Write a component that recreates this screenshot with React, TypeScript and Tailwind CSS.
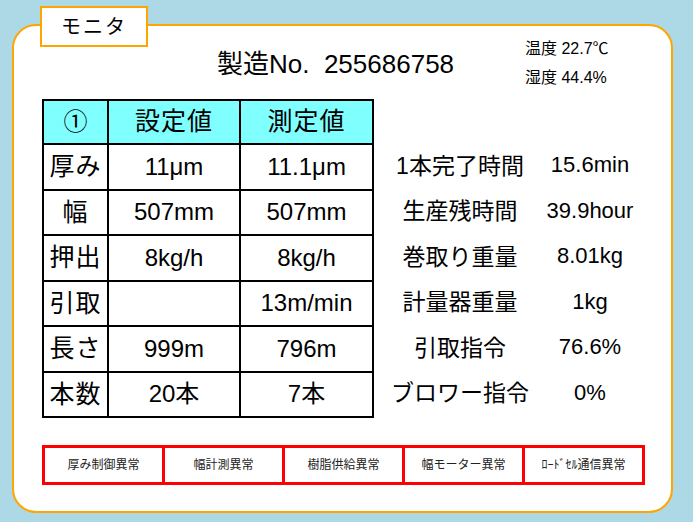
import React from 'react';

const FONT = { fontFamily: '"Liberation Sans", "Noto Sans CJK JP", sans-serif' };

const TABLE_ROWS = [
  { label: '厚み', set: '11μm', actual: '11.1μm' },
  { label: '幅', set: '507mm', actual: '507mm' },
  { label: '押出', set: '8kg/h', actual: '8kg/h' },
  { label: '引取', set: '', actual: '13m/min' },
  { label: '長さ', set: '999m', actual: '796m' },
  { label: '本数', set: '20本', actual: '7本' },
];

const STATUS = [
  { label: '1本完了時間', value: '15.6min' },
  { label: '生産残時間', value: '39.9hour' },
  { label: '巻取り重量', value: '8.01kg' },
  { label: '計量器重量', value: '1kg' },
  { label: '引取指令', value: '76.6%' },
  { label: 'ブロワー指令', value: '0%' },
];

const ALARMS = ['厚み制御異常', '幅計測異常', '樹脂供給異常', '幅モーター異常', 'ﾛｰﾄﾞｾﾙ通信異常'];

export default function App() {
  return (
    <div className="w-[693px] h-[522px] bg-[#add8e6] pt-[24px] pl-[12px] text-black overflow-hidden" style={FONT}>
      <div className="relative w-[661px] h-[489px] bg-white border-2 border-[#ffa500] rounded-[24px]">
        {/* title tab */}
        <div className="absolute left-[26px] top-[-20px] w-[108px] h-[41px] bg-white border-2 border-[#ffa500] flex items-center justify-center text-[20px] tracking-[2px]">
          モニタ
        </div>

        {/* header */}
        <div className="flex h-[73px]">
          <div className="w-[511px] pl-[203px] pt-[22px] text-[26px] leading-[32px] whitespace-nowrap">
            製造No.&nbsp;&nbsp;255686758
          </div>
          <div className="pt-[8px] text-[16px] leading-[29px] whitespace-nowrap">
            <div>温度 22.7℃</div>
            <div>湿度 44.4%</div>
          </div>
        </div>

        {/* table + status */}
        <div className="flex pl-[28px]">
          <table className="border-collapse border-2 border-black">
            <thead>
              <tr className="h-[44px] bg-[#80ffff]">
                <th className="w-[65px] border-2 border-black font-normal text-[24px]">①</th>
                <th className="w-[132px] border-2 border-black font-normal text-[25px] tracking-[1px]">設定値</th>
                <th className="w-[133px] border-2 border-black font-normal text-[25px] tracking-[1px]">測定値</th>
              </tr>
            </thead>
            <tbody>
              {TABLE_ROWS.map(r => (
                <tr key={r.label} className="h-[45.5px]">
                  <td className="border-2 border-black text-center text-[25px] tracking-[1px] whitespace-nowrap">{r.label}</td>
                  <td className="border-2 border-black text-center text-[24px] whitespace-nowrap">{r.set}</td>
                  <td className="border-2 border-black text-center text-[24px] whitespace-nowrap">{r.actual}</td>
                </tr>
              ))}
            </tbody>
          </table>

          <div className="flex flex-col pt-[44px]">
            {STATUS.map(s => (
              <div key={s.label} className="flex h-[45.5px] items-center">
                <div className="w-[172px] flex justify-center text-[23px] whitespace-nowrap">{s.label}</div>
                <div className="w-[88px] flex justify-center text-[22px] whitespace-nowrap -mt-[2px]">{s.value}</div>
              </div>
            ))}
          </div>
        </div>

        {/* alarms */}
        <div className="ml-[28px] mt-[27px] w-[603px] h-[40px] flex border-[3px] border-[#ff0000] divide-x-[3px] divide-[#ff0000]">
          {ALARMS.map(a => (
            <div key={a} className="flex-1 flex items-center justify-center text-[12px] text-[#222] whitespace-nowrap">
              {a}
            </div>
          ))}
        </div>
      </div>
    </div>
  );
}
